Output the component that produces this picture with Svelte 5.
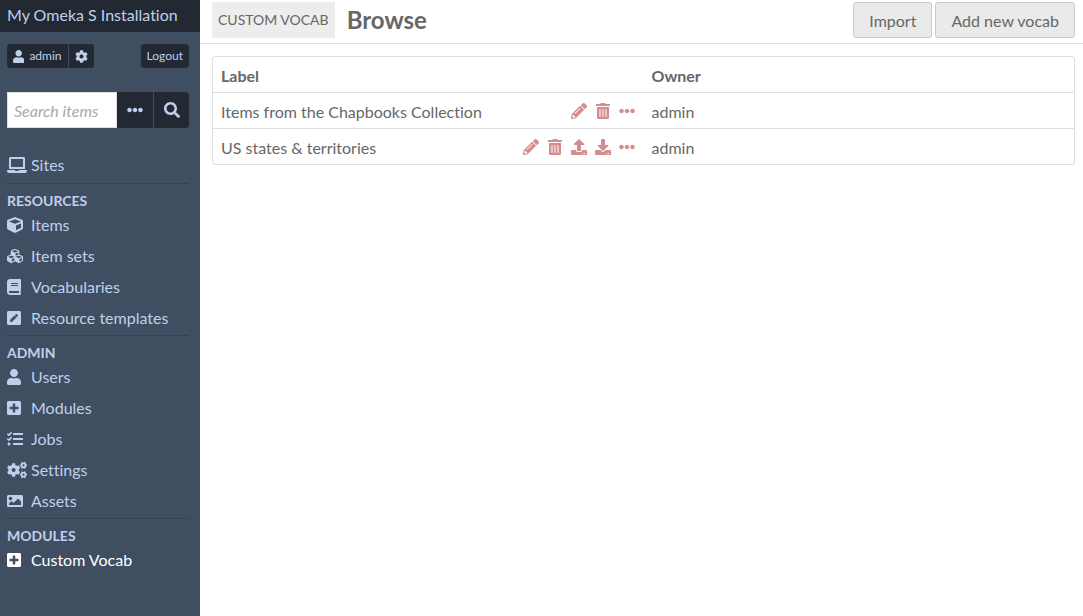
<script>
  // Outline of a toothed wheel with a round hole, drawn clockwise from the first tooth.
  function gear(cx, cy, outer, inner, hole, teeth, turn = 0) {
    const step = (Math.PI * 2) / teeth;
    const at = (r, a) => `${(cx + r * Math.cos(a)).toFixed(1)} ${(cy + r * Math.sin(a)).toFixed(1)}`;
    const points = [];
    for (let i = 0; i < teeth; i++) {
      const a = i * step + turn;
      points.push(at(inner, a - step * 0.3), at(outer, a - step * 0.22), at(outer, a + step * 0.22), at(inner, a + step * 0.3));
    }
    return `M${points.join('L')}ZM${cx - hole} ${cy}a${hole} ${hole} 0 1 0 ${hole * 2} 0a${hole} ${hole} 0 1 0 ${-hole * 2} 0Z`;
  }

  const icons = {
    user: [448, 'M224 256c70.7 0 128-57.3 128-128S294.7 0 224 0 96 57.3 96 128s57.3 128 128 128zm89.6 32h-16.7c-22.2 10.2-46.9 16-72.9 16s-50.6-5.8-72.9-16h-16.7C60.2 288 0 348.2 0 422.4V464c0 26.5 21.5 48 48 48h352c26.5 0 48-21.5 48-48v-41.6c0-74.2-60.2-134.4-134.4-134.4z'],
    cog: [512, 'M487.4 315.7l-42.6-24.6c4.3-23.2 4.3-47 0-70.2l42.6-24.6c4.9-2.8 7.1-8.6 5.5-14-11.1-35.6-30-67.8-54.7-94.6-3.8-4.1-10-5.1-14.8-2.3L380.8 110c-17.9-15.4-38.5-27.3-60.8-35.1V25.8c0-5.6-3.9-10.5-9.4-11.7-36.7-8.2-74.3-7.8-109.2 0-5.5 1.2-9.4 6.1-9.4 11.7V75c-22.2 7.9-42.8 19.8-60.8 35.1L88.7 85.5c-4.9-2.8-11-1.9-14.8 2.3-24.7 26.7-43.6 58.9-54.7 94.6-1.7 5.4.6 11.2 5.5 14L67.3 221c-4.3 23.2-4.3 47 0 70.2l-42.6 24.6c-4.9 2.8-7.1 8.6-5.5 14 11.1 35.6 30 67.8 54.7 94.6 3.8 4.1 10 5.1 14.8 2.3l42.6-24.6c17.9 15.4 38.5 27.3 60.8 35.1v49.2c0 5.6 3.9 10.5 9.4 11.7 36.7 8.2 74.3 7.8 109.2 0 5.5-1.2 9.4-6.1 9.4-11.7v-49.2c22.2-7.9 42.8-19.8 60.8-35.1l42.6 24.6c4.9 2.8 11 1.9 14.8-2.3 24.7-26.7 43.6-58.9 54.7-94.6 1.5-5.5-.7-11.3-5.6-14.1zM256 336c-44.1 0-80-35.9-80-80s35.9-80 80-80 80 35.9 80 80-35.9 80-80 80z'],
    ellipsis: [512, 'M328 256c0 39.8-32.2 72-72 72s-72-32.2-72-72 32.2-72 72-72 72 32.2 72 72zm104-72c-39.8 0-72 32.2-72 72s32.2 72 72 72 72-32.2 72-72-32.2-72-72-72zm-352 0c-39.8 0-72 32.2-72 72s32.2 72 72 72 72-32.2 72-72-32.2-72-72-72z'],
    search: [512, 'M505 442.7L405.3 343c-4.5-4.5-10.6-7-17-7H372c27.6-35.3 44-79.7 44-128C416 93.1 322.9 0 208 0S0 93.1 0 208s93.1 208 208 208c48.3 0 92.7-16.4 128-44v16.3c0 6.4 2.5 12.5 7 17l99.7 99.7c9.4 9.4 24.6 9.4 33.9 0l28.3-28.3c9.4-9.4 9.4-24.6.1-34zM208 336c-70.7 0-128-57.2-128-128 0-70.7 57.2-128 128-128 70.7 0 128 57.2 128 128 0 70.7-57.2 128-128 128z'],
    laptop: [640, 'M624 416H381.54c-.74 19.81-14.71 32-32.74 32H288c-18.69 0-33.02-17.47-32.77-32H16c-8.8 0-16 7.2-16 16v16c0 35.2 28.8 64 64 64h512c35.2 0 64-28.8 64-64v-16c0-8.8-7.2-16-16-16zM576 48c0-26.4-21.6-48-48-48H112C85.6 0 64 21.6 64 48v336h512V48zm-64 272H128V64h384v256z'],
    cube: [512, 'M239.1 6.3l-208 78c-18.7 7-31.1 25-31.1 45v225.1c0 18.2 10.3 34.8 26.5 42.9l208 104c13.5 6.8 29.4 6.8 42.9 0l208-104c16.3-8.1 26.5-24.8 26.5-42.9V129.3c0-20-12.4-37.9-31.1-44.9l-208-78C262 2.2 250 2.2 239.1 6.3zM256 68.4l192 72v1.1l-192 78-192-78v-1.1l192-72zm32 356V275.5l160-65v133.9l-160 80z'],
    cubes: [512, 'M488.6 250.2L392 214V105.5c0-15-9.3-28.4-23.4-33.7l-100-37.5c-8.1-3.1-17.1-3.1-25.3 0l-100 37.5c-14.1 5.3-23.4 18.7-23.4 33.7V214l-96.6 36.2C9.3 255.5 0 268.9 0 283.9V394c0 13.6 7.7 26.1 19.9 32.2l100 50c10.1 5.1 22.1 5.1 32.2 0l103.9-52 103.9 52c10.1 5.1 22.1 5.1 32.2 0l100-50c12.2-6.1 19.9-18.6 19.9-32.2V283.9c0-15-9.3-28.4-23.4-33.7zM358 214.8l-85 31.9v-68.2l85-37v73.3zM154 104.1l102-38.2 102 38.2v.6l-102 41.4-102-41.4v-.6zm84 291.1l-85 42.5v-79.1l85-38.8v75.4zm0-112l-102 41.4-102-41.4v-.6l102-38.2 102 38.2v.6zm240 112l-85 42.5v-79.1l85-38.8v75.4zm0-112l-102 41.4-102-41.4v-.6l102-38.2 102 38.2v.6z'],
    book: [448, 'M448 360V24c0-13.3-10.7-24-24-24H96C43 0 0 43 0 96v320c0 53 43 96 96 96h328c13.3 0 24-10.7 24-24v-16c0-7.5-3.5-14.3-8.9-18.7-4.2-15.4-4.2-59.3 0-74.7 5.4-4.3 8.9-11.1 8.9-18.6zM128 134c0-3.3 2.7-6 6-6h212c3.3 0 6 2.7 6 6v20c0 3.3-2.7 6-6 6H134c-3.3 0-6-2.7-6-6v-20zm0 64c0-3.3 2.7-6 6-6h212c3.3 0 6 2.7 6 6v20c0 3.3-2.7 6-6 6H134c-3.3 0-6-2.7-6-6v-20zm253.4 250H96c-17.7 0-32-14.3-32-32 0-17.6 14.4-32 32-32h285.4c-1.9 17.1-1.9 46.9 0 64z'],
    penSquare: [448, 'M400 480H48c-26.5 0-48-21.5-48-48V80c0-26.5 21.5-48 48-48h352c26.5 0 48 21.5 48 48v352c0 26.5-21.5 48-48 48zM238.1 177.9L102.4 313.6l-6.3 57.1c-.8 7.6 5.6 14.1 13.3 13.3l57.1-6.3L302.2 242c2.3-2.3 2.3-6.1 0-8.5L246.7 178c-2.5-2.4-6.3-2.4-8.6-.1zM345 165.1L314.9 135c-9.4-9.4-24.6-9.4-33.9 0l-23.1 23.1c-2.3 2.3-2.3 6.1 0 8.5l55.5 55.5c2.3 2.3 6.1 2.3 8.5 0L345 199c9.3-9.3 9.3-24.5 0-33.9z'],
    plusSquare: [448, 'M400 32H48C21.5 32 0 53.5 0 80v352c0 26.5 21.5 48 48 48h352c26.5 0 48-21.5 48-48V80c0-26.5-21.5-48-48-48zm-32 252c0 6.6-5.4 12-12 12h-92v92c0 6.6-5.4 12-12 12h-56c-6.6 0-12-5.4-12-12v-92H92c-6.6 0-12-5.4-12-12v-56c0-6.6 5.4-12 12-12h92v-92c0-6.6 5.4-12 12-12h56c6.6 0 12 5.4 12 12v92h92c6.6 0 12 5.4 12 12v56z'],
    tasks: [512, 'M139.61 35.5a12 12 0 0 0-17 0L58.93 98.81l-22.7-22.12a12 12 0 0 0-17 0L3.53 92.41a12 12 0 0 0 0 17l47.59 47.4a12.78 12.78 0 0 0 17.61 0l15.59-15.62L156.52 69a12.09 12.09 0 0 0 .09-17zm0 159.19a12 12 0 0 0-17 0l-63.68 63.72-22.7-22.1a12 12 0 0 0-17 0L3.53 252a12 12 0 0 0 0 17L51 316.5a12.77 12.77 0 0 0 17.6 0l15.7-15.69 72.2-72.22a12 12 0 0 0 .09-16.9zM64 368c-26.49 0-48.59 21.5-48.59 48S37.53 464 64 464a48 48 0 0 0 0-96zm432 16H208a16 16 0 0 0-16 16v32a16 16 0 0 0 16 16h288a16 16 0 0 0 16-16v-32a16 16 0 0 0-16-16zm0-320H208a16 16 0 0 0-16 16v32a16 16 0 0 0 16 16h288a16 16 0 0 0 16-16V80a16 16 0 0 0-16-16zm0 160H208a16 16 0 0 0-16 16v32a16 16 0 0 0 16 16h288a16 16 0 0 0 16-16v-32a16 16 0 0 0-16-16z'],
    cogs: [640, gear(212, 256, 218, 172, 66, 6, Math.PI / 6) + gear(528, 106, 118, 92, 36, 6) + gear(528, 406, 118, 92, 36, 6)],
    image: [512, 'M464 448H48c-26.51 0-48-21.49-48-48V112c0-26.51 21.49-48 48-48h416c26.51 0 48 21.49 48 48v288c0 26.51-21.49 48-48 48zM112 120c-30.928 0-56 25.072-56 56s25.072 56 56 56 56-25.072 56-56-25.072-56-56-56zM64 384h384V272l-87.515-87.515c-4.686-4.686-12.284-4.686-16.971 0L208 320l-55.515-55.515c-4.686-4.686-12.284-4.686-16.971 0L64 336v48z'],
    pencil: [512, 'M497.9 142.1l-46.1 46.1c-4.7 4.7-12.3 4.7-17 0l-111-111c-4.7-4.7-4.7-12.3 0-17l46.1-46.1c18.7-18.7 49.1-18.7 67.9 0l60.1 60.1c18.8 18.7 18.8 49.1 0 67.9zM284.2 99.8L21.6 362.4.4 483.9c-2.9 16.4 11.4 30.6 27.8 27.8l121.5-21.3 262.6-262.6c4.7-4.7 4.7-12.3 0-17l-111-111c-4.8-4.7-12.4-4.7-17.1 0zM124.1 339.9c-5.5-5.5-5.5-14.3 0-19.8l154-154c5.5-5.5 14.3-5.5 19.8 0s5.5 14.3 0 19.8l-154 154c-5.5 5.5-14.3 5.5-19.8 0zM88 424h48v36.3l-64.5 11.3-31.1-31.1L51.7 376H88v48z'],
    trash: [448, 'M32 464a48 48 0 0 0 48 48h288a48 48 0 0 0 48-48V128H32zm272-256a16 16 0 0 1 32 0v224a16 16 0 0 1-32 0zm-96 0a16 16 0 0 1 32 0v224a16 16 0 0 1-32 0zm-96 0a16 16 0 0 1 32 0v224a16 16 0 0 1-32 0zM432 32H312l-9.4-18.7A24 24 0 0 0 281.1 0H166.8a23.72 23.72 0 0 0-21.4 13.3L136 32H16A16 16 0 0 0 0 48v32a16 16 0 0 0 16 16h416a16 16 0 0 0 16-16V48a16 16 0 0 0-16-16z'],
    upload: [512, 'M296 384h-80c-13.3 0-24-10.7-24-24V192h-87.7c-17.8 0-26.7-21.5-14.1-34.1L242.3 5.7c7.5-7.5 19.8-7.5 27.3 0l152.2 152.2c12.6 12.6 3.7 34.1-14.1 34.1H320v168c0 13.3-10.7 24-24 24zm216-8v112c0 13.3-10.7 24-24 24H24c-13.3 0-24-10.7-24-24V376c0-13.3 10.7-24 24-24h136v8c0 30.9 25.1 56 56 56h80c30.9 0 56-25.1 56-56v-8h136c13.3 0 24 10.7 24 24zm-124 88c0-11-9-20-20-20s-20 9-20 20 9 20 20 20 20-9 20-20zm64 0c0-11-9-20-20-20s-20 9-20 20 9 20 20 20 20-9 20-20z'],
    download: [512, 'M216 0h80c13.3 0 24 10.7 24 24v168h87.7c17.8 0 26.7 21.5 14.1 34.1L269.7 378.3c-7.5 7.5-19.8 7.5-27.3 0L90.1 226.1c-12.6-12.6-3.7-34.1 14.1-34.1H192V24c0-13.3 10.7-24 24-24zm296 376v112c0 13.3-10.7 24-24 24H24c-13.3 0-24-10.7-24-24V376c0-13.3 10.7-24 24-24h146.7l49 49c20.1 20.1 52.5 20.1 72.6 0l49-49H488c13.3 0 24 10.7 24 24zm-124 88c0-11-9-20-20-20s-20 9-20 20 9 20 20 20 20-9 20-20zm64 0c0-11-9-20-20-20s-20 9-20 20 9 20 20 20 20-9 20-20z']
  };

  const sections = [
    { items: [['laptop', 'Sites']] },
    { title: 'Resources', items: [['cube', 'Items'], ['cubes', 'Item sets'], ['book', 'Vocabularies'], ['penSquare', 'Resource templates']] },
    { title: 'Admin', items: [['user', 'Users'], ['plusSquare', 'Modules'], ['tasks', 'Jobs'], ['cogs', 'Settings'], ['image', 'Assets']] },
    { title: 'Modules', items: [['plusSquare', 'Custom Vocab', true]] }
  ];

  const vocabs = [
    { label: 'Items from the Chapbooks Collection', owner: 'admin', actions: ['pencil', 'trash', 'ellipsis'] },
    { label: 'US states & territories', owner: 'admin', actions: ['pencil', 'trash', 'upload', 'download', 'ellipsis'] }
  ];

  const actionNames = { pencil: 'Edit', trash: 'Delete', upload: 'Import', download: 'Export', ellipsis: 'Details' };
</script>

{#snippet icon(name)}
  <svg class="icon" viewBox="0 0 {icons[name][0]} 512" style:aspect-ratio="{icons[name][0]} / 512" aria-hidden="true">
    <path fill-rule="evenodd" d={icons[name][1]} />
  </svg>
{/snippet}

<div class="page">
  <header class="sidebar">
    <a class="brand" href="#home">My Omeka S Installation</a>

    <div class="account">
      <div class="pair">
        <a class="chip" href="#user">{@render icon('user')}admin</a>
        <a class="chip" href="#user-settings" aria-label="User settings">{@render icon('cog')}</a>
      </div>
      <a class="chip" href="#logout">Logout</a>
    </div>

    <form class="search" role="search" onsubmit={(e) => e.preventDefault()}>
      <input type="text" placeholder="Search items" aria-label="Search items" />
      <button type="button" class="more" aria-label="Search options">{@render icon('ellipsis')}</button>
      <button type="submit" aria-label="Search">{@render icon('search')}</button>
    </form>

    <nav>
      {#each sections as section}
        <section>
          {#if section.title}<h4>{section.title}</h4>{/if}
          <ul>
            {#each section.items as [glyph, name, active]}
              <li>
                <a href="#{glyph}" class:active aria-current={active ? 'page' : undefined}>
                  <span class="slot">{@render icon(glyph)}</span>{name}
                </a>
              </li>
            {/each}
          </ul>
        </section>
      {/each}
    </nav>
  </header>

  <main>
    <div class="title-bar">
      <h1><span class="crumb">Custom Vocab</span><span>Browse</span></h1>
      <div class="page-actions">
        <button type="button">Import</button>
        <button type="button">Add new vocab</button>
      </div>
    </div>

    <div class="frame">
      <table>
        <thead>
          <tr><th scope="col">Label</th><th scope="col">Owner</th></tr>
        </thead>
        <tbody>
          {#each vocabs as vocab}
            <tr>
              <td>
                <div class="cell">
                  <span>{vocab.label}</span>
                  <div class="actions">
                    {#each vocab.actions as action}
                      <a href="#{action}" aria-label={actionNames[action]}>{@render icon(action)}</a>
                    {/each}
                  </div>
                </div>
              </td>
              <td>{vocab.owner}</td>
            </tr>
          {/each}
        </tbody>
      </table>
    </div>
  </main>
</div>

<style>
  :global(body) {
    margin: 0;
    background: #fff;
  }

  .page {
    display: grid;
    grid-template-columns: 200px 1fr;
    min-height: 100vh;
    font-family: Lato, 'Liberation Sans', sans-serif;
    font-size: 16px;
    font-variant-ligatures: none;
    line-height: 24px;
    color: #676767;
  }

  a {
    color: inherit;
    text-decoration: none;
  }

  button,
  input {
    font: inherit;
    margin: 0;
    box-sizing: border-box;
  }

  .icon {
    display: block;
    height: 16px;
    flex: none;
    fill: currentColor;
  }

  .sidebar {
    background: #404e61;
    color: #bfd0ec;
  }

  .brand {
    display: block;
    padding: 0 7px 2px;
    background: #222933;
    line-height: 30px;
  }

  .account {
    display: flex;
    justify-content: space-between;
    padding: 12px 11px 24px 7px;
    font-size: 12px;
  }

  .pair {
    display: flex;
    gap: 1px;
  }

  .chip {
    display: flex;
    align-items: center;
    gap: 5px;
    padding: 0 6px;
    border-radius: 3px;
    background: #222933;
  }

  .chip .icon {
    height: 13px;
  }

  .pair .chip:first-child {
    border-radius: 3px 0 0 3px;
  }

  .pair .chip:last-child {
    border-radius: 0 3px 3px 0;
  }

  .search {
    display: grid;
    grid-template-columns: 1fr 37px 35px;
    height: 36px;
    padding: 0 11px 0 7px;
  }

  .search input {
    min-width: 0;
    padding: 2px 6px 0;
    border: 1px solid #dfdfdf;
    border-radius: 0;
    background: #fff;
    color: #676767;
  }

  .search input::placeholder {
    color: #a9a9a9;
    font-style: italic;
  }

  .search button {
    display: grid;
    place-items: center;
    padding: 0;
    border: 0;
    border-radius: 0 3px 3px 0;
    background: #222933;
    color: inherit;
  }

  .search .more {
    border-right: 1px solid #404e61;
    border-radius: 0;
  }

  nav {
    padding: 21px 11px 0 7px;
  }

  section {
    padding-bottom: 2px;
  }

  section:first-child {
    padding-bottom: 3px;
  }

  section + section {
    border-top: 1px solid #344151;
    padding-top: 9px;
  }

  h4 {
    margin: 0;
    font-size: 14px;
    line-height: 16px;
    text-transform: uppercase;
  }

  ul {
    margin: 0;
    padding: 0;
    list-style: none;
  }

  nav a {
    display: flex;
    align-items: center;
    line-height: 31px;
  }

  .slot {
    flex: 0 0 24px;
  }

  nav .active {
    color: #fff;
  }

  .title-bar {
    display: flex;
    justify-content: space-between;
    padding: 2px 8px 5px 12px;
    border-bottom: 1px solid #dfdfdf;
  }

  h1 {
    display: flex;
    gap: 12px;
    margin: 0;
    font-size: 24px;
    line-height: 36px;
  }

  .crumb {
    padding: 0 6px;
    background: #ededed;
    font-size: 14px;
    font-weight: 400;
    text-transform: uppercase;
  }

  .page-actions {
    display: flex;
    gap: 3px;
  }

  .page-actions button {
    height: 36px;
    padding: 2px 15px 0;
    border: 1px solid #c8c8c8;
    border-radius: 3px;
    background: #eaeaea;
    color: #676767;
  }

  .frame {
    margin: 12px 8px 0 12px;
    border: 1px solid #dfdfdf;
    border-radius: 3px;
  }

  table {
    width: 100%;
    border-collapse: collapse;
    table-layout: fixed;
  }

  th,
  td {
    padding: 7px 8px 4px;
    text-align: left;
  }

  td:first-child {
    padding-right: 5px;
  }

  tbody tr {
    border-top: 1px solid #dfdfdf;
  }

  .cell {
    display: flex;
    justify-content: space-between;
  }

  .actions {
    display: flex;
    color: #d48c8c;
  }

  .actions a {
    display: grid;
    place-items: center;
    width: 24px;
    height: 22px;
  }
</style>
